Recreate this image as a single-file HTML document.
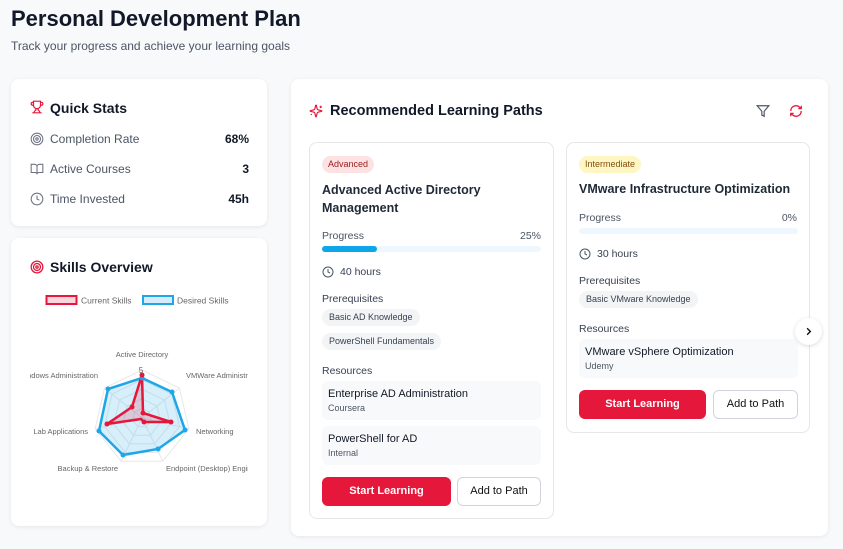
<!DOCTYPE html>
<html><head><meta charset="utf-8"><style>
*{box-sizing:border-box;margin:0;padding:0}
body{width:843px;height:549px;background:#f8f9fb;font-family:"Liberation Sans",sans-serif;color:#111827;position:relative;overflow:hidden}
.a{position:absolute}
.card{position:absolute;background:#fff;border-radius:8px;box-shadow:0 1px 4px rgba(0,0,0,.08)}
.ic{border:1px solid #e5e7eb;border-radius:8px;background:#fff;position:absolute}
.t12{font-size:12px}
.pill{position:absolute;background:#f3f4f6;border-radius:10px;font-size:9px;color:#374151;padding:0 7px;height:17px;line-height:17px}
.res{position:absolute;background:#f8f9fb;border-radius:6px}
.btnr{position:absolute;background:#e5173b;color:#fff;border-radius:6px;font-size:11px;font-weight:bold;text-align:center;line-height:29px;height:29px}
.btnw{position:absolute;background:#fff;border:1px solid #d1d5db;color:#111;border-radius:6px;font-size:11px;text-align:center;line-height:27px;height:29px}
.gray{color:#4b5563}
</style></head><body>
<div class="a" style="left:11px;top:6px;font-size:22px;font-weight:bold">Personal Development Plan</div>
<div class="a gray" style="left:11px;top:39px;font-size:12px">Track your progress and achieve your learning goals</div>

<div class="card" style="left:11px;top:79px;width:256px;height:147px">
<svg class="a" style="left:19px;top:21px" width="14" height="14" viewBox="0 0 24 24" fill="none" stroke="#e5173b" stroke-width="2"><path d="M6 9H4.5a2.5 2.5 0 0 1 0-5H6M18 9h1.5a2.5 2.5 0 0 0 0-5H18M4 22h16M10 14.7V17c0 .6-.5 1-1 1.2C7.8 18.8 7 20.2 7 22M14 14.7V17c0 .6.5 1 1 1.2 1.2.6 2 2 2 3.8M18 2H6v7a6 6 0 0 0 12 0V2z"/></svg>
<div class="a" style="left:39px;top:21px;font-size:14px;font-weight:bold">Quick Stats</div>
<svg class="a" style="left:19px;top:53px" width="14" height="14" viewBox="0 0 24 24" fill="none" stroke="#6b7280" stroke-width="1.8"><circle cx="12" cy="12" r="10"/><circle cx="12" cy="12" r="6"/><circle cx="12" cy="12" r="2"/></svg>
<div class="a gray t12" style="left:39px;top:53px">Completion Rate</div><div class="a t12" style="right:18px;top:53px;font-weight:bold">68%</div>
<svg class="a" style="left:19px;top:83px" width="14" height="14" viewBox="0 0 24 24" fill="none" stroke="#6b7280" stroke-width="1.8"><path d="M2 4h6a4 4 0 0 1 4 4v13a3 3 0 0 0-3-3H2zM22 4h-6a4 4 0 0 0-4 4v13a3 3 0 0 1 3-3h7z"/></svg>
<div class="a gray t12" style="left:39px;top:83px">Active Courses</div><div class="a t12" style="right:18px;top:83px;font-weight:bold">3</div>
<svg class="a" style="left:19px;top:113px" width="14" height="14" viewBox="0 0 24 24" fill="none" stroke="#6b7280" stroke-width="1.8"><circle cx="12" cy="12" r="10"/><path d="M12 6v6l4 2"/></svg>
<div class="a gray t12" style="left:39px;top:113px">Time Invested</div><div class="a t12" style="right:18px;top:113px;font-weight:bold">45h</div>
</div>

<div class="card" style="left:11px;top:238px;width:256px;height:288px">
<svg class="a" style="left:19px;top:22px" width="14" height="14" viewBox="0 0 24 24" fill="none" stroke="#e5173b" stroke-width="2.2"><circle cx="12" cy="12" r="10"/><circle cx="12" cy="12" r="6"/><circle cx="12" cy="12" r="2"/></svg>
<div class="a" style="left:39px;top:21px;font-size:14px;font-weight:bold">Skills Overview</div>
</div>
<div class="a" style="left:30px;top:290px;width:218px;height:190px;overflow:hidden">
<svg width="218" height="190" viewBox="30 290 218 190" style="font-family:'Liberation Sans',sans-serif">
<rect x="46.5" y="296" width="30" height="8" fill="#fbd5dc" stroke="#e5173b" stroke-width="2"/>
<text x="81" y="303.5" font-size="8.5" fill="#666">Current Skills</text>
<rect x="143" y="296" width="30" height="8" fill="#d6ecfa" stroke="#1ea7e8" stroke-width="2"/>
<text x="177" y="303.5" font-size="8.5" fill="#666">Desired Skills</text>
<g transform="translate(142 418)" fill="none" stroke="#e8e8e8" stroke-width="1">
<polygon points="0,-48 37.5,-29.9 46.8,10.7 20.8,43.2 -20.8,43.2 -46.8,10.7 -37.5,-29.9"/>
<polygon transform="scale(.8)" vector-effect="non-scaling-stroke" points="0,-48 37.5,-29.9 46.8,10.7 20.8,43.2 -20.8,43.2 -46.8,10.7 -37.5,-29.9"/>
<polygon transform="scale(.6)" vector-effect="non-scaling-stroke" points="0,-48 37.5,-29.9 46.8,10.7 20.8,43.2 -20.8,43.2 -46.8,10.7 -37.5,-29.9"/>
<polygon transform="scale(.4)" vector-effect="non-scaling-stroke" points="0,-48 37.5,-29.9 46.8,10.7 20.8,43.2 -20.8,43.2 -46.8,10.7 -37.5,-29.9"/>
<polygon transform="scale(.2)" vector-effect="non-scaling-stroke" points="0,-48 37.5,-29.9 46.8,10.7 20.8,43.2 -20.8,43.2 -46.8,10.7 -37.5,-29.9"/>
<path d="M0 0L0 -48M0 0L37.5 -29.9M0 0L46.8 10.7M0 0L20.8 43.2M0 0L-20.8 43.2M0 0L-46.8 10.7M0 0L-37.5 -29.9"/>
</g>
<polygon points="142,378 172,392 185,430 158,449 123,455 99,431 108,389" fill="rgba(30,167,232,.18)" stroke="#1ea7e8" stroke-width="2.5"/>
<polygon points="142,375 143,413 171,422 144,422 141,419 107,424 132,407" fill="rgba(229,23,59,.18)" stroke="#e5173b" stroke-width="2.5"/>
<g fill="#1ea7e8"><circle cx="142" cy="378" r="2.5"/><circle cx="172" cy="392" r="2.5"/><circle cx="185" cy="430" r="2.5"/><circle cx="158" cy="449" r="2.5"/><circle cx="123" cy="455" r="2.5"/><circle cx="99" cy="431" r="2.5"/><circle cx="108" cy="389" r="2.5"/></g>
<g fill="#e5173b"><circle cx="142" cy="375" r="2.5"/><circle cx="143" cy="413" r="2.5"/><circle cx="171" cy="422" r="2.5"/><circle cx="144" cy="422" r="2.5"/><circle cx="107" cy="424" r="2.5"/><circle cx="132" cy="407" r="2.5"/></g>
<text x="141" y="373" font-size="8" fill="#666" text-anchor="middle">5</text>
<g font-size="7.5" fill="#666">
<text x="142" y="357" text-anchor="middle">Active Directory</text>
<text x="186" y="378">VMWare Administration</text>
<text x="196" y="434">Networking</text>
<text x="166" y="471">Endpoint (Desktop) Engineering</text>
<text x="118" y="471" text-anchor="end">Backup &amp; Restore</text>
<text x="88" y="434" text-anchor="end">Lab Applications</text>
<text x="98" y="378" text-anchor="end">Windows Administration</text>
</g>
</svg></div>

<div class="card" style="left:291px;top:79px;width:537px;height:457px">
<svg class="a" style="left:18px;top:25px" width="14" height="14" viewBox="0 0 24 24" fill="none" stroke="#e5173b" stroke-width="2"><path d="M9.9 15.5a2 2 0 0 0-1.4-1.4L2.4 12.5a.5.5 0 0 1 0-1l6.1-1.6a2 2 0 0 0 1.4-1.4l1.6-6.1a.5.5 0 0 1 1 0l1.6 6.1a2 2 0 0 0 1.4 1.4l6.1 1.6a.5.5 0 0 1 0 1l-6.1 1.6a2 2 0 0 0-1.4 1.4l-1.6 6.1a.5.5 0 0 1-1 0zM20 3v4M22 5h-4M4 17v2M5 18H3"/></svg>
<div class="a" style="left:39px;top:24px;font-size:14.5px;font-weight:bold">Recommended Learning Paths</div>
<svg class="a" style="left:465px;top:25px" width="14" height="14" viewBox="0 0 24 24" fill="none" stroke="#4b5563" stroke-width="2"><path d="M22 3H2l8 9.5V19l4 2v-8.5z"/></svg>
<svg class="a" style="left:498px;top:25px" width="14" height="14" viewBox="0 0 24 24" fill="none" stroke="#e5173b" stroke-width="2.2"><path d="M3 12a9 9 0 0 1 15-6.7L21 8M21 3v5h-5M21 12a9 9 0 0 1-15 6.7L3 16M8 16H3v5"/></svg>
</div>

<div class="ic" style="left:309px;top:142px;width:245px;height:377px">
<div class="a" style="left:12px;top:13px;background:#fde2e4;color:#991b1b;font-size:9px;border-radius:9px;padding:0 6px;height:17px;line-height:17px">Advanced</div>
<div class="a" style="left:12px;top:38px;font-size:12.5px;font-weight:bold;line-height:18px;width:200px;color:#1f2937">Advanced Active Directory Management</div>
<div class="a gray" style="left:12px;top:87px;font-size:10.5px">Progress</div><div class="a gray" style="right:12px;top:87px;font-size:10.5px">25%</div>
<div class="a" style="left:12px;top:103px;width:219px;height:6px;background:#eef7fd;border-radius:3px"><div style="width:55px;height:6px;background:#0ea5e9;border-radius:3px"></div></div>
<svg class="a" style="left:12px;top:123px" width="12" height="12" viewBox="0 0 24 24" fill="none" stroke="#4b5563" stroke-width="2"><circle cx="12" cy="12" r="10"/><path d="M12 6v6l4 2"/></svg>
<div class="a" style="left:30px;top:123px;font-size:10.5px;color:#374151">40 hours</div>
<div class="a" style="left:12px;top:150px;font-size:10.5px;color:#374151">Prerequisites</div>
<div class="pill" style="left:12px;top:166px">Basic AD Knowledge</div>
<div class="pill" style="left:12px;top:190px">PowerShell Fundamentals</div>
<div class="a" style="left:12px;top:222px;font-size:10.5px;color:#374151">Resources</div>
<div class="res" style="left:12px;top:238px;width:219px;height:39px"><div class="a" style="left:6px;top:7px;font-size:11px">Enterprise AD Administration</div><div class="a gray" style="left:6px;top:22px;font-size:9px">Coursera</div></div>
<div class="res" style="left:12px;top:283px;width:219px;height:39px"><div class="a" style="left:6px;top:7px;font-size:11px">PowerShell for AD</div><div class="a gray" style="left:6px;top:22px;font-size:9px">Internal</div></div>
<div class="btnr" style="left:12px;top:334px;width:129px">Start Learning</div>
<div class="btnw" style="left:147px;top:334px;width:84px">Add to Path</div>
</div>

<div class="ic" style="left:566px;top:142px;width:244px;height:291px">
<div class="a" style="left:12px;top:13px;background:#fef6c3;color:#854d0e;font-size:9px;border-radius:9px;padding:0 6px;height:17px;line-height:17px">Intermediate</div>
<div class="a" style="left:12px;top:39px;font-size:12.5px;font-weight:bold;color:#1f2937">VMware Infrastructure Optimization</div>
<div class="a gray" style="left:12px;top:69px;font-size:10.5px">Progress</div><div class="a gray" style="right:12px;top:69px;font-size:10.5px">0%</div>
<div class="a" style="left:12px;top:85px;width:219px;height:6px;background:#eef7fd;border-radius:3px"></div>
<svg class="a" style="left:12px;top:105px" width="12" height="12" viewBox="0 0 24 24" fill="none" stroke="#4b5563" stroke-width="2"><circle cx="12" cy="12" r="10"/><path d="M12 6v6l4 2"/></svg>
<div class="a" style="left:30px;top:105px;font-size:10.5px;color:#374151">30 hours</div>
<div class="a" style="left:12px;top:132px;font-size:10.5px;color:#374151">Prerequisites</div>
<div class="pill" style="left:12px;top:148px">Basic VMware Knowledge</div>
<div class="a" style="left:12px;top:180px;font-size:10.5px;color:#374151">Resources</div>
<div class="res" style="left:12px;top:196px;width:219px;height:39px"><div class="a" style="left:6px;top:7px;font-size:11px">VMware vSphere Optimization</div><div class="a gray" style="left:6px;top:22px;font-size:9px">Udemy</div></div>
<div class="btnr" style="left:12px;top:247px;width:127px">Start Learning</div>
<div class="btnw" style="left:146px;top:247px;width:85px">Add to Path</div>
</div>

<div class="a" style="left:795px;top:318px;width:27px;height:27px;border-radius:50%;background:#fff;box-shadow:0 1px 4px rgba(0,0,0,.15)">
<svg class="a" style="left:8px;top:8px" width="11" height="11" viewBox="0 0 24 24" fill="none" stroke="#111" stroke-width="3"><path d="M9 5l7 7-7 7"/></svg></div>
</body></html>
